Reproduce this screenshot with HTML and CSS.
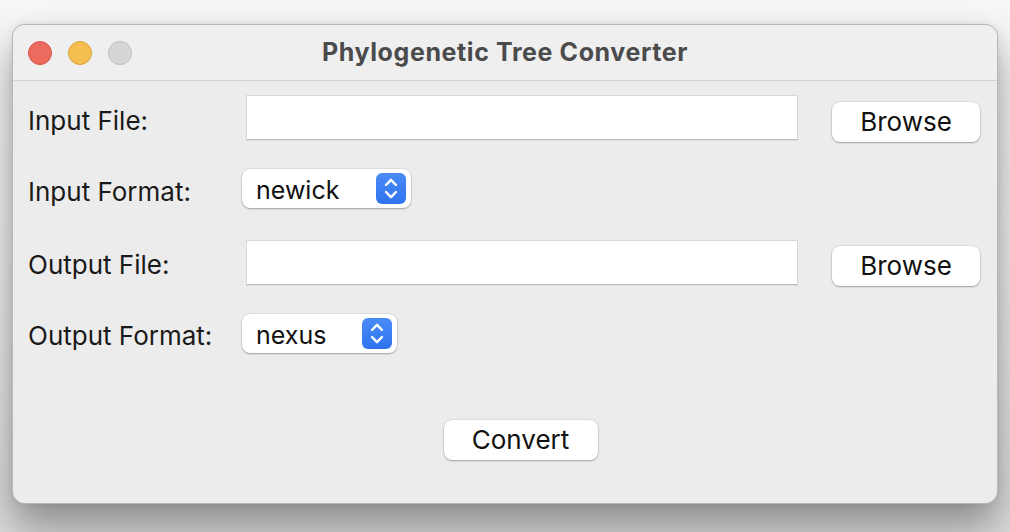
FILE: index.html
```html
<!DOCTYPE html>
<html>
<head>
<meta charset="utf-8">
<title>Phylogenetic Tree Converter</title>
<link rel="stylesheet" href="styles.css">
</head>
<body>
<div class="window">
  <div class="titlebar">
    <div class="lights">
      <span class="light red"></span>
      <span class="light yellow"></span>
      <span class="light gray"></span>
    </div>
    <div class="title">Phylogenetic Tree Converter</div>
    <div></div>
  </div>
  <div class="content">
    <div class="row row1">
      <div class="label">Input File:</div>
      <div class="field"></div>
      <div class="btn browse">Browse</div>
    </div>
    <div class="row row2">
      <div class="label">Input Format:</div>
      <div class="select sel-newick"><span class="sel-text">newick</span><span class="stepper"><svg width="16" height="31" viewBox="0 0 16 31"><path d="M3 12 L8 6.8 L13 12 M3 19 L8 24.2 L13 19" fill="none" stroke="#fff" stroke-width="2.4" stroke-linecap="round" stroke-linejoin="round"/></svg></span></div>
    </div>
    <div class="row row3">
      <div class="label">Output File:</div>
      <div class="field"></div>
      <div class="btn browse">Browse</div>
    </div>
    <div class="row row4">
      <div class="label">Output Format:</div>
      <div class="select sel-nexus"><span class="sel-text">nexus</span><span class="stepper"><svg width="16" height="31" viewBox="0 0 16 31"><path d="M3 12 L8 6.8 L13 12 M3 19 L8 24.2 L13 19" fill="none" stroke="#fff" stroke-width="2.4" stroke-linecap="round" stroke-linejoin="round"/></svg></span></div>
    </div>
    <div class="row row5">
      <div class="btn convert">Convert</div>
    </div>
  </div>
</div>
</body>
</html>
```

FILE: styles.css
```css
html, body {
  margin: 0;
  padding: 0;
}
body {
  width: 1010px;
  height: 532px;
  overflow: hidden;
  background: linear-gradient(180deg, #f7f7f7 0%, #eeeeee 50%, #dcdcdc 100%);
  font-family: Inter, "Liberation Sans", Arial, sans-serif;
  padding-top: 24px;
  padding-left: 12px;
  box-sizing: border-box;
}
.window {
  width: 986px;
  height: 480px;
  box-sizing: border-box;
  border: 1px solid rgba(0,0,0,0.22);
  border-radius: 13px;
  background: #ececec;
  box-shadow: 0 22px 40px rgba(0,0,0,0.38), 0 0 6px rgba(0,0,0,0.08);
  overflow: hidden;
  display: flex;
  flex-direction: column;
}
.titlebar {
  height: 56px;
  box-sizing: border-box;
  border-bottom: 1px solid #d3d3d3;
  background: #efeff0;
  display: grid;
  grid-template-columns: 1fr auto 1fr;
  align-items: center;
}
.lights {
  display: flex;
  gap: 16px;
  padding-left: 15px;
  padding-top: 1px;
}
.light {
  width: 24px;
  height: 24px;
  border-radius: 50%;
  box-sizing: border-box;
}
.red { background: #ed6a5e; border: 1px solid #d9534a; }
.yellow { background: #f5bf4f; border: 1px solid #dca23a; }
.gray { background: #d6d6d7; border: 1px solid #bfbfc0; }
.title {
  font-size: 25px;
  font-weight: 700;
  color: #4b4b4b;
  letter-spacing: 0.6px;
  margin-bottom: 2px;
}
.content {
  padding: 14px 17px 0 15px;
}
.row {
  display: flex;
  align-items: flex-start;
}
.label {
  width: 214px;
  font-size: 26px;
  line-height: 30px;
  color: #1a1a1a;
}
.row1 { height: 47px; }
.row1 .label { margin-top: 11px; }
.row2 { margin-top: 27px; height: 39px; }
.row2 .label { margin-top: 8px; }
.row3 { margin-top: 32px; height: 46px; }
.row3 .label { margin-top: 10px; }
.row4 { margin-top: 28px; height: 39px; }
.row4 .label { margin-top: 7px; }
.row5 { margin-top: 67px; justify-content: center; padding-left: 33px; }

.field {
  margin-left: 4px;
  width: 552px;
  height: 45px;
  box-sizing: border-box;
  background: #fff;
  border: 1px solid #d8d8d8;
  border-bottom-color: #bcbcbc;
  box-shadow: 0 1px 0 #dedede;
}
.btn {
  height: 40px;
  box-sizing: border-box;
  background: #fff;
  border-radius: 8px;
  box-shadow: 0 0 0 0.5px rgba(0,0,0,0.12), 0 1px 2px rgba(0,0,0,0.28);
  font-size: 26px;
  line-height: 40px;
  text-align: center;
  color: #111;
}
.browse {
  width: 148px;
  margin-left: 34px;
}
.row1 .browse { margin-top: 7px; }
.row3 .browse { margin-top: 6px; }
.convert {
  width: 154px;
}
.select {
  height: 39px;
  box-sizing: border-box;
  background: #fff;
  border-radius: 8px;
  box-shadow: 0 0 0 0.5px rgba(0,0,0,0.12), 0 1px 2px rgba(0,0,0,0.28);
  display: flex;
  align-items: center;
  justify-content: space-between;
  padding-left: 14px;
  padding-right: 5px;
}
.sel-newick { width: 169px; }
.sel-nexus { width: 155px; }
.sel-text {
  font-size: 25px;
  color: #111;
  line-height: 30px;
  margin-top: 3px;
}
.stepper {
  width: 30px;
  height: 31px;
  border-radius: 6px;
  background: linear-gradient(180deg, #4a8bf7 0%, #2f74ef 100%);
  display: flex;
  align-items: center;
  justify-content: center;
}
.stepper svg { display: block; }
```
